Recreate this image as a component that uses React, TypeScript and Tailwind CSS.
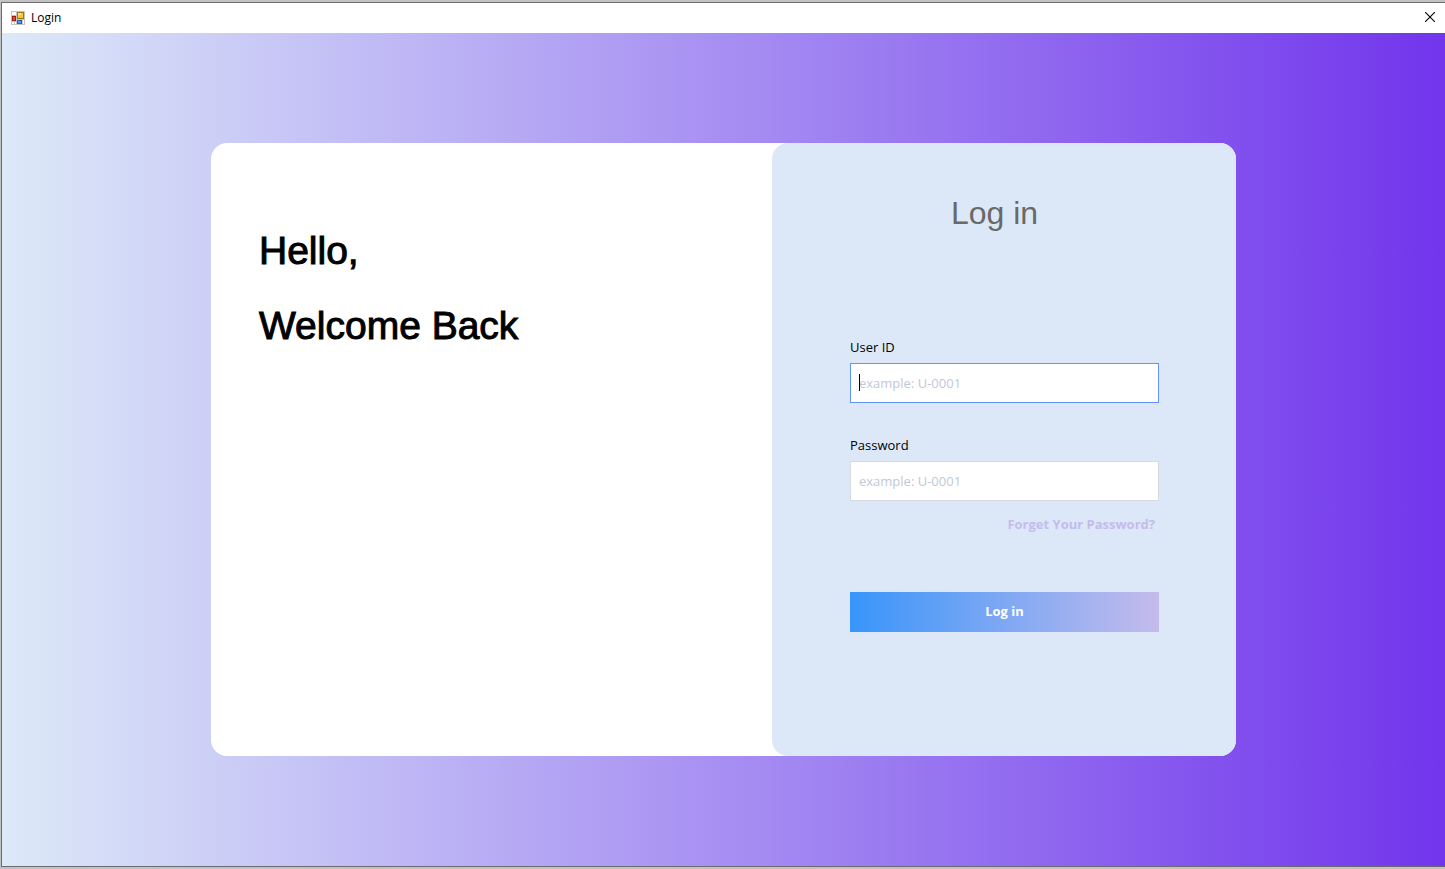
import React from "react";

function FormIcon() {
  return (
    <svg width="14" height="14" viewBox="0 0 14 14" shapeRendering="crispEdges" aria-hidden="true">
      <rect width="14" height="14" fill="#c3c3c3" />
      <rect x="1" y="1" width="4" height="3" fill="#fff" />
      <rect x="1" y="11" width="4" height="2" fill="#fff" />
      <rect x="12" y="9" width="1" height="4" fill="#fff" />
      <rect x="3" y="11" width="1" height="2" fill="#c3c3c3" />
      <rect x="1" y="5" width="4" height="5" fill="#a3160c" />
      <rect x="2" y="6" width="2" height="3" fill="#d8513a" />
      <rect x="6" y="1" width="7" height="7" fill="#a8740c" />
      <rect x="7" y="2" width="5" height="5" fill="#fbc630" />
      <rect x="7" y="2" width="3" height="2" fill="#ffe38a" />
      <rect x="6" y="9" width="5" height="4" fill="#2c5fc4" />
      <rect x="7" y="10" width="3" height="2" fill="#5c93f0" />
    </svg>
  );
}

function TitleBar() {
  return (
    <header className="flex h-[30px] shrink-0 items-center justify-between bg-white pr-2.5 pl-[9px]">
      <div className="flex items-center gap-1.5">
        <FormIcon />
        <span className="font-['Open_Sans','Noto_Sans',sans-serif] text-xs text-black">Login</span>
      </div>
      <button type="button" aria-label="Close" className="flex items-center pb-0.5">
        <svg width="10" height="10" viewBox="0 0 10 10" stroke="#000" strokeWidth="1.1" aria-hidden="true">
          <path d="M0 0L10 10M10 0L0 10" />
        </svg>
      </button>
    </header>
  );
}

type FieldProps = { id: string; label: string; type: string; focused?: boolean };

function Field({ id, label, type, focused = false }: FieldProps) {
  return (
    <div className="flex flex-col gap-[7px]">
      <label htmlFor={id} className="text-[13px] leading-[18px] text-black">
        {label}
      </label>
      <div className="relative">
        <input
          id={id}
          type={type}
          autoFocus={focused}
          placeholder="example: U-0001"
          className="peer block h-10 w-full border border-[#d5dadf] bg-white px-2 text-[13px] text-black outline-none placeholder:text-[#c1c8d8] placeholder-shown:caret-transparent focus:border-[#5e94ff]"
        />
        <span className="pointer-events-none absolute top-[11px] left-[9px] hidden h-[17px] w-px bg-black peer-[:focus:placeholder-shown]:block" />
      </div>
    </div>
  );
}

export default function App() {
  return (
    <div className="flex min-h-screen flex-col bg-[#c2c2c2] pt-0.5 pb-0.5 pl-px font-['Open_Sans','Noto_Sans',sans-serif]">
      <div className="flex grow flex-col border-y border-l border-[#6c6c70]">
        <TitleBar />
        <main className="flex grow items-center justify-center bg-linear-to-r/srgb from-[#dce9f8] to-[#7235ec]">
          <div className="flex w-full max-w-[1025px] rounded-2xl bg-white">
            <section className="flex grow flex-col gap-[30px] pt-[85px] pl-12 font-['Liberation_Sans',Arial,sans-serif] text-[39px] leading-[45px] text-black [-webkit-text-stroke:1px_#000]">
              <p>Hello,</p>
              <h1>Welcome Back</h1>
            </section>
            <section className="w-[464px] rounded-2xl bg-[#dce8f8] pt-[52px] pr-[77px] pb-[124px] pl-[78px]">
              <h2 className="pr-5 text-center font-['Liberation_Sans',Arial,sans-serif] text-[32px] leading-9 text-[#696969]">
                Log in
              </h2>
              <form className="mt-[107px] flex flex-col" onSubmit={(event) => event.preventDefault()}>
                <div className="flex flex-col gap-[33px]">
                  <Field id="user-id" label="User ID" type="text" focused />
                  <Field id="password" label="Password" type="password" />
                </div>
                <a href="#forgot" className="mt-3.5 mr-1 self-end text-[13px] leading-[18px] font-bold text-[#c5bbec]">
                  Forget Your Password?
                </a>
                <button
                  type="submit"
                  className="mt-[59px] h-10 w-full bg-linear-to-r/srgb from-[#3895fa] to-[#c5bbec] text-[13px] font-bold text-white"
                >
                  Log in
                </button>
              </form>
            </section>
          </div>
        </main>
      </div>
    </div>
  );
}
